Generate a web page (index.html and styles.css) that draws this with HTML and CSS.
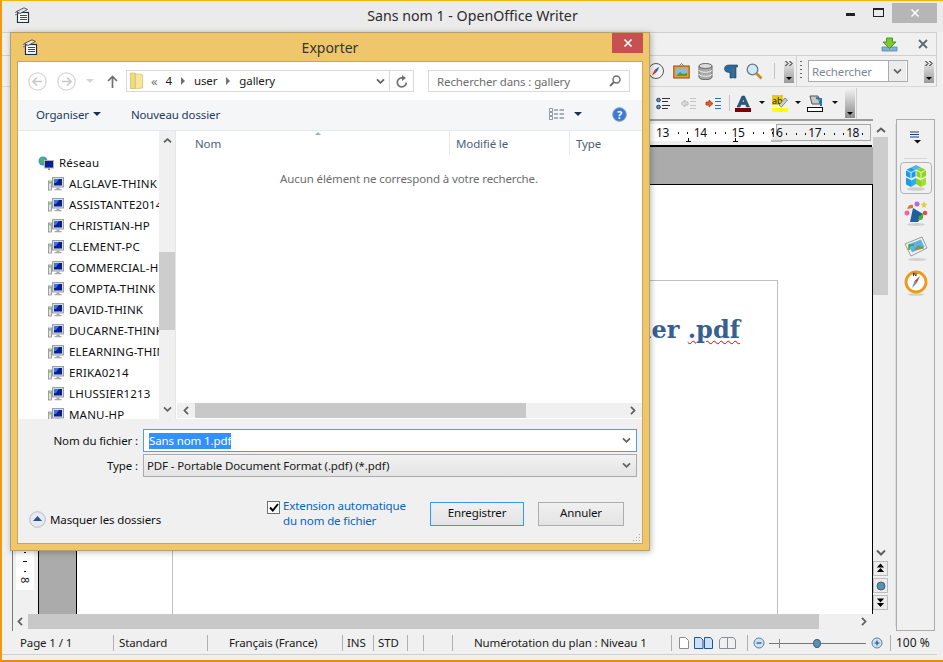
FILE: index.html
```html
<!DOCTYPE html>
<html lang="fr">
<head>
<meta charset="utf-8">
<title>Sans nom 1 - OpenOffice Writer</title>
<link rel="stylesheet" href="styles.css">
</head>
<body>
<svg class="defs" width="0" height="0">
  <symbol id="chev" viewBox="0 0 10 8"><path d="M1 1.500 5 5.500 9 1.500" fill="none" stroke="#606060" stroke-width="2"/></symbol>
  <symbol id="appdoc" viewBox="0 0 16 16">
    <rect x="3.500" y="5.500" width="11" height="10" fill="#fff" stroke="#16324e" stroke-width="1.200"/>
    <path d="M6 8.500h7M6 10.500h7M6 12.500h7" stroke="#1f5585"/>
    <path d="M2.500 4.500 10 .8l3.500 1.700L6 6.500Z" fill="#e4e4e4" stroke="#3a3a3a" stroke-width=".8"/>
    <path d="M1 8 5 6M1 5.500l3-1.500" stroke="#666" stroke-width=".9"/>
  </symbol>
  <symbol id="pc" viewBox="0 0 16 16">
    <rect x="0.500" y="5" width="3" height="9" fill="#dfe5df" stroke="#8a8a8a" stroke-width=".8"/>
    <rect x="1.300" y="6" width="1.400" height="1.500" fill="#4fc04f"/>
    <rect x="4.500" y="1.500" width="11" height="9.500" fill="#d6dbe0" stroke="#9aa0a6"/>
    <rect x="6" y="3" width="8" height="6.500" fill="#0a2090"/>
    <path d="M6 3h5l-3 4H6Z" fill="#3f74e0"/>
    <path d="M8.500 11.500h3v1.500h2v1.200H6.500V13h2Z" fill="#a5a9ad"/>
  </symbol>
</svg>

<div class="window">
  <header class="titlebar">
    <svg class="app-ico"><use href="#appdoc"/></svg>
    <div class="title">Sans nom 1 - OpenOffice Writer</div>
    <div class="winctl">
      <span class="min"></span>
      <span class="max"></span>
      <span class="close"><svg width="10" height="10" viewBox="0 0 10 10"><path d="M1.500 1.500 8.500 8.500M8.500 1.500 1.500 8.500" stroke="#fff" stroke-width="1.500"/></svg></span>
    </div>
  </header>

  <div class="row menu-row">
    <svg class="dl" width="17" height="15" viewBox="0 0 17 15">
      <path d="M1 10h15v4H1Z" fill="#7fb2d8" stroke="#5585a8" stroke-width=".8"/>
      <path d="M5.500 1h6v4H15l-6.500 6.500L2 5h3.500Z" fill="#7cc82e" stroke="#3f8a1a" stroke-width=".9"/>
    </svg>
    <svg class="doc-x" width="10" height="10" viewBox="0 0 10 10"><path d="M1 1 9 9M9 1 1 9" stroke="#5a6a70" stroke-width="1.800"/></svg>
  </div>

  <div class="row tool-row-a">
    <svg class="tb" width="18" height="18" viewBox="0 0 18 18"><circle cx="9" cy="9" r="7.500" fill="#f4f4f4" stroke="#555"/><path d="M12.500 4.500 9.800 10 7.500 8Z" fill="#2255cc"/><path d="M5 13.500 7.500 8l2.300 2Z" fill="#dd3322"/></svg>
    <svg class="tb" width="17" height="16" viewBox="0 0 17 16"><rect x=".8" y="3" width="15.400" height="12" fill="#e8a038" stroke="#8a4a10"/><rect x="3" y="5.500" width="11" height="7.500" fill="#7cc0e8"/><path d="M3 13 7 9l3 2 4-1v3Z" fill="#5a9a2a"/><path d="M6 3l2.500-2.500L11 3" fill="none" stroke="#777"/></svg>
    <svg class="tb db" width="15" height="17" viewBox="0 0 15 17"><path d="M1 3v11c0 3.500 13 3.500 13 0V3Z" fill="#a8aaa8" stroke="#666"/><ellipse cx="7.500" cy="3" rx="6.500" ry="2.500" fill="#dcdcdc" stroke="#666"/><path d="M1 7c0 3 13 3 13 0M1 11c0 3 13 3 13 0" fill="none" stroke="#f0f0f0"/></svg>
    <svg class="tb" width="14" height="15" viewBox="0 0 14 15"><path d="M5 1h8.500v2H12v11H9.500V3h-1v11H6V8.500C2 8.500.5 6.800.5 4.700S2 1 5 1Z" fill="#2a6a9a" stroke="#14405f" stroke-width=".6"/></svg>
    <svg class="tb" width="17" height="17" viewBox="0 0 17 17"><circle cx="6.500" cy="6.500" r="5.300" fill="#cfe8fa" stroke="#6a7a88" stroke-width="1.300"/><path d="M10.500 10.500 15.500 15.500" stroke="#c88a20" stroke-width="2.600"/></svg>
    <span class="vsep"></span>
    <span class="over"><svg width="8" height="7" viewBox="0 0 8 7"><path d="M.5 1 3 3.500.5 6M4.500 1 7 3.500 4.500 6" fill="none" stroke="#000"/></svg><i></i></span>
    <span class="sect">
      <span class="grip"></span>
      <span class="searchcombo"><span class="st">Rechercher</span><span class="drop"><svg width="9" height="7"><use href="#chev"/></svg></span></span>
      <span class="over last"><svg width="8" height="7" viewBox="0 0 8 7"><path d="M.5 1 3 3.500.5 6M4.500 1 7 3.500 4.500 6" fill="none" stroke="#000"/></svg><i></i></span>
    </span>
  </div>

  <div class="row tool-row-b">
    <div class="tb-b">
      <svg width="15" height="13" viewBox="0 0 15 13"><circle cx="2.500" cy="3" r="1.800" fill="#6fa0c8" stroke="#123a5a"/><circle cx="2.500" cy="10" r="1.800" fill="#6fa0c8" stroke="#123a5a"/><path d="M6 1.500h8M6 4.500h6M6 8.500h8M6 11.500h6" stroke="#333"/></svg>
      <svg class="m1" width="17" height="13" viewBox="0 0 17 13"><path d="M1 6.500 5 3v2h3v3H5v2Z" fill="#d8d8d8" stroke="#bbb"/><path d="M10 1.500h6M10 4.500h6M10 8.500h6M10 11.500h6" stroke="#c4c4c4"/></svg>
      <svg class="m2" width="17" height="13" viewBox="0 0 17 13"><path d="M8 6.500 4 3v2H1v3h3v2Z" fill="#e85a20" stroke="#a03010" stroke-width=".7"/><path d="M10 1.500h6M10 4.500h6M10 8.500h6M10 11.500h6" stroke="#1a78b8"/></svg>
      <span class="vsep b"></span>
      <svg class="m3" width="16" height="17" viewBox="0 0 16 17"><path d="M2 12 7 1h2.500l5 11h-3l-1-2.500H6L5 12Zm5-5h2.500L8.300 4Z" fill="#2a5a80" stroke="#143a58" stroke-width=".5"/><rect y="13" width="16" height="4" fill="#7d0000"/></svg>
      <span class="caret m4"></span>
      <svg class="m5" width="16" height="17" viewBox="0 0 16 17"><rect width="11" height="10" fill="#e8c820"/><text x="0" y="9" class="abt">ab</text><path d="M7 10 13 3l2.500 2-6 7Z" fill="#c8ced4" stroke="#666" stroke-width=".7"/><rect y="13" width="16" height="4" fill="#ffff00"/></svg>
      <span class="caret m6"></span>
      <svg class="m7" width="16" height="17" viewBox="0 0 16 17"><path d="M3 1 11 1 13 9H5Z" fill="#c8c8c8" stroke="#555"/><path d="M9 3 14 4 14 11" fill="none" stroke="#1a78b8" stroke-width="2"/><rect x=".5" y="12.500" width="15" height="4" fill="#fff" stroke="#111"/></svg>
      <span class="caret m8"></span>
      <span class="over tall"><i></i></span>
    </div>
  </div>

  <div class="workspace">
    <div class="editor">
      <div class="hruler">
        <div class="rstrip">
          <div class="rlight"><b>13</b><b>14</b><b>15</b></div>
          <div class="rgrey"><b class="g16">16</b><b class="g17">17</b><b>18</b></div>
          <span class="mk mk1"></span><span class="mk mk2"></span>
          <span class="mk-tri"></span>
        </div>
      </div>
      <div class="viewrow">
        <div class="vruler"><div class="vstrip"><i class="vd d1"></i><i class="vd d2"></i><i class="vd d3"></i><span class="v8">8</span></div></div>
        <div class="docview">
          <div class="page">
            <div class="margins">
              <h1 class="heading">Mon fichier <span class="sp">.pdf</span></h1>
            </div>
          </div>
        </div>
      </div>
      <div class="hscroll">
        <svg class="ch-l" width="6" height="9" viewBox="0 0 6 9"><path d="M5 .8 1.500 4.500 5 8.200" fill="none" stroke="#606060" stroke-width="1.800"/></svg>
        <span class="hthumb"></span>
        <svg class="ch-r" width="6" height="9" viewBox="0 0 6 9"><path d="M1 .8 4.500 4.500 1 8.200" fill="none" stroke="#606060" stroke-width="1.800"/></svg>
      </div>
    </div>

    <div class="vscroll">
      <svg class="up" width="10" height="8" viewBox="0 0 10 8"><path d="M1 6 5 2.500 9 6" fill="none" stroke="#606060" stroke-width="2"/></svg>
      <span class="vthumb"></span>
      <svg class="down" width="10" height="8"><use href="#chev"/></svg>
      <span class="nav"><svg width="9" height="11" viewBox="0 0 10 11"><path d="M5 0 9 4.500H1ZM5 5 9 9.500H1Z" fill="#000"/></svg></span>
      <span class="nav"><svg width="10" height="10" viewBox="0 0 10 10"><circle cx="5" cy="5" r="4" fill="#5f8fb0" stroke="#40607a"/></svg></span>
      <span class="nav"><svg width="9" height="11" viewBox="0 0 10 11"><path d="M1 1h8L5 5.500ZM1 6h8l-4 4.500Z" fill="#000"/></svg></span>
    </div>

    <aside class="sidebar">
      <svg class="menuic" width="14" height="13" viewBox="0 0 14 13"><path d="M1 1h9M1 3.500h9M1 6h9" stroke="#1f3f7f" stroke-width="1.200"/><path d="M5 9h7l-3.500 3.500Z" fill="#111"/></svg>
      <span class="sline"></span>
      <span class="sbtn on">
        <svg width="22" height="26" viewBox="0 0 22 26">
          <ellipse cx="11" cy="24" rx="9" ry="1.800" fill="#cfcfcf"/>
          <path d="M1 5l5-2.500L11 5v6l-5 2.500L1 11Z" fill="#1e9be8"/><path d="M6 2.500 11 0l5 2.500L11 5Z" fill="#49b6f2"/><path d="M11 5l5-2.500L21 5v6l-5 2.500L11 11Z" fill="#8fd41e"/><path d="M1 12.500 6 15v7l-5-2.500Z" fill="#1e9be8"/><path d="M6 15l5-2.500V19l-5 3Z" fill="#2eaef0"/><path d="M11 12.500l5 2.500v7l-5-3Z" fill="#8fd41e"/><path d="M16 15l5-2.500v7L16 22Z" fill="#a6e02e"/>
          <path d="M1 5l5 2.500L11 5M6 7.500v6M11 5l5 2.500L21 5M16 7.500v6M11 5v6M6 15l5-2.500 5 2.500" fill="none" stroke="#fff" stroke-width=".8"/>
        </svg>
      </span>
      <span class="sbtn">
        <svg width="24" height="26" viewBox="0 0 24 26"><ellipse cx="12" cy="24.500" rx="9" ry="1.500" fill="#d0d0d0"/><path d="M6 22 9 8l10 6-5 8Z" fill="#1f5f9f"/><path d="M9 8 3 9c1-4 4-5 6-4Z" fill="#d8782a"/><path d="M14 20c4 1 6-2 5-6l-4 2Z" fill="#4fa83a"/><circle cx="13" cy="4" r="2.500" fill="#b46ad8"/><path d="M20 1l1 2.500 2.500.3-2 1.700.6 2.500-2.100-1.300-2.100 1.300.6-2.500-2-1.700 2.500-.3Z" fill="#e8c840"/><circle cx="3" cy="13" r="2.500" fill="#e868a8"/><circle cx="21" cy="13" r="2.300" fill="#e05050"/></svg>
      </span>
      <span class="sbtn">
        <svg width="24" height="25" viewBox="0 0 24 25"><ellipse cx="13" cy="23.500" rx="9" ry="1.500" fill="#d0d0d0"/><path d="M1 8 18 1l5 11L7 20Z" fill="#f4f4f4" stroke="#999"/><path d="M4 8.500 17 3.500l3.500 7.500L8 16.500Z" fill="#5fb0e8"/><path d="M10 14.500l4-5 5 1.500 1 1.500Z" fill="#7a9a3a"/><path d="M5 9h5M5 9v5" stroke="#3aa03a" stroke-width="1.500"/></svg>
      </span>
      <span class="sbtn">
        <svg width="24" height="26" viewBox="0 0 24 26"><ellipse cx="12" cy="24.500" rx="8" ry="1.300" fill="#d0d0d0"/><circle cx="12" cy="12" r="10" fill="#fff" stroke="#ee9a18" stroke-width="2.800"/><path d="M16 6 12.800 13 10.500 11Z" fill="#e04030"/><path d="M8 18 10.500 11l2.300 2Z" fill="#6a8ac8"/><path d="M9.500 6V2.800L12 6V2.800" fill="none" stroke="#222" stroke-width=".9"/></svg>
      </span>
    </aside>
  </div>

  <footer class="status">
    <span class="cell c1">Page 1 / 1</span>
    <span class="cell c2">Standard</span>
    <span class="cell c3">Français (France)</span>
    <span class="cell c4">INS</span>
    <span class="cell c5">STD</span>
    <span class="cell c6"></span>
    <span class="cell c7"></span>
    <span class="cell c8">Numérotation du plan : Niveau 1</span>
    <span class="cell c9">
      <svg width="10" height="12" viewBox="0 0 10 12"><path d="M.5.5h6l3 3v8H.5Z" fill="#fff" stroke="#8a8f95"/></svg>
      <svg class="dbl" width="19" height="12" viewBox="0 0 19 12"><path d="M.5.500h6l2.500 2.500v8.500H.500Z" fill="#cfe0f4" stroke="#1f5590"/><path d="M10.500.5h6l2 2.500v8.500h-8Z" fill="#cfe0f4" stroke="#1f5590"/></svg>
      <svg class="bk" width="17" height="12" viewBox="0 0 17 12"><path d="M.5 3 2.500.5h6v11h-8ZM8.500.5h6L16.500 3v8.500h-8Z" fill="#eef0f2" stroke="#8a8f95"/></svg>
    </span>
    <span class="cell c10">
      <svg width="12" height="12" viewBox="0 0 12 12"><circle cx="6" cy="6" r="5" fill="#cfe2f4" stroke="#5a7f9f"/><path d="M3.500 6h5" stroke="#1f4f7f" stroke-width="1.200"/></svg>
      <span class="slider"><i class="stick"></i><i class="knob"></i></span>
      <svg width="12" height="12" viewBox="0 0 12 12"><circle cx="6" cy="6" r="5" fill="#cfe2f4" stroke="#5a7f9f"/><path d="M3.500 6h5M6 3.500v5" stroke="#1f4f7f" stroke-width="1.200"/></svg>
    </span>
    <span class="cell c11">100 %</span>
  </footer>
</div>

<section class="dialog">
  <div class="dlg-title">
    <svg class="dlg-ico"><use href="#appdoc"/></svg>
    <span class="dlg-name">Exporter</span>
    <span class="dlg-close"><svg width="10" height="10" viewBox="0 0 10 10"><path d="M1.500 1.500 8.500 8.500M8.500 1.500 1.500 8.500" stroke="#fff" stroke-width="1.600"/></svg></span>
  </div>
  <div class="dlg-body">
    <div class="navbar">
      <svg class="circ" width="19" height="19" viewBox="0 0 19 19"><circle cx="9.500" cy="9.500" r="8.700" fill="#fff" stroke="#d6d6d6" stroke-width="1.300"/><path d="M14 9.500H5.500M9 5.500l-4 4 4 4" fill="none" stroke="#c8c8c8" stroke-width="1.600"/></svg>
      <svg class="circ fw" width="19" height="19" viewBox="0 0 19 19"><circle cx="9.500" cy="9.500" r="8.700" fill="#fff" stroke="#d6d6d6" stroke-width="1.300"/><path d="M5 9.500h8.500M10 5.500l4 4-4 4" fill="none" stroke="#c8c8c8" stroke-width="1.600"/></svg>
      <span class="hist"></span>
      <svg class="uparr" width="11" height="13" viewBox="0 0 11 13"><path d="M5.500 13V2M1 6l4.500-4.500L10 6" fill="none" stroke="#707070" stroke-width="1.700"/></svg>
      <div class="addr">
        <svg class="folder" width="13" height="17" viewBox="0 0 13 17"><path d="M.5 1h5v16h-5Z" fill="#e8d070"/><path d="M5 2h5l2.500 1v13l-7.500 1Z" fill="#f6e69a" stroke="#cdb45a" stroke-width=".6"/><path d="M.5 1h4.500v15l-4.500 1Z" fill="#f2dc80" stroke="#cdb45a" stroke-width=".6"/></svg>
        <span class="crumbs">
          <span class="lq">«</span><span class="cr">4</span><i class="tri"></i><span class="cr">user</span><i class="tri"></i><span class="cr">gallery</span>
        </span>
        <svg class="addr-ch" width="9" height="7"><use href="#chev"/></svg>
        <span class="refresh"><svg width="12" height="13" viewBox="0 0 12 13"><path d="M10.300 7.500A4.500 4.500 0 1 1 6.500 3" fill="none" stroke="#707070" stroke-width="1.700"/><path d="M6 0l4 3-4 3Z" fill="#707070"/></svg></span>
      </div>
      <div class="searchbox">
        <span>Rechercher dans : gallery</span>
        <svg width="12" height="12" viewBox="0 0 12 12"><circle cx="7.500" cy="4.500" r="3.500" fill="none" stroke="#707070" stroke-width="1.500"/><path d="M5 7 1 11" stroke="#707070" stroke-width="2"/></svg>
      </div>
    </div>

    <div class="cmdbar">
      <span class="cmd">Organiser</span><i class="dcaret"></i>
      <span class="cmd new">Nouveau dossier</span>
      <svg class="viewic" width="15" height="12" viewBox="0 0 15 12"><path d="M.5.5h3v3h-3ZM.5 4.500h3v3h-3ZM.5 8.500h3v3h-3Z" fill="#fff" stroke="#6f7f9f" stroke-width=".8"/><path d="M5 2h4M10.500 2H15M5 6h4M10.500 6H15M5 10h4M10.500 10H15" stroke="#5a6a80"/></svg>
      <i class="dcaret v"></i>
      <svg class="help" width="15" height="15" viewBox="0 0 15 15"><circle cx="7.500" cy="7.500" r="6.800" fill="#3a7ad8" stroke="#8a9ab0"/><text x="7.500" y="11.500" class="q">?</text></svg>
    </div>

    <div class="browser">
      <nav class="tree">
        <div class="list">
          <div class="net"><svg width="16" height="16" viewBox="0 0 16 16"><circle cx="5" cy="6" r="4.500" fill="#3a9ad8"/><path d="M2 4c2-2 3 0 4-1l1 3-3 3Z" fill="#5fb83a"/><rect x="6.500" y="5.500" width="9" height="7.500" fill="#0a2090" stroke="#b0b6bc"/><path d="M10 13.500h2v1.500h-2Z" fill="#888"/></svg>Réseau</div>
          <div class="pc"><svg width="16" height="16"><use href="#pc"/></svg>ALGLAVE-THINK</div>
          <div class="pc"><svg width="16" height="16"><use href="#pc"/></svg>ASSISTANTE2014</div>
          <div class="pc"><svg width="16" height="16"><use href="#pc"/></svg>CHRISTIAN-HP</div>
          <div class="pc"><svg width="16" height="16"><use href="#pc"/></svg>CLEMENT-PC</div>
          <div class="pc"><svg width="16" height="16"><use href="#pc"/></svg>COMMERCIAL-HP</div>
          <div class="pc"><svg width="16" height="16"><use href="#pc"/></svg>COMPTA-THINK</div>
          <div class="pc"><svg width="16" height="16"><use href="#pc"/></svg>DAVID-THINK</div>
          <div class="pc"><svg width="16" height="16"><use href="#pc"/></svg>DUCARNE-THINK</div>
          <div class="pc"><svg width="16" height="16"><use href="#pc"/></svg>ELEARNING-THINK</div>
          <div class="pc"><svg width="16" height="16"><use href="#pc"/></svg>ERIKA0214</div>
          <div class="pc"><svg width="16" height="16"><use href="#pc"/></svg>LHUSSIER1213</div>
          <div class="pc"><svg width="16" height="16"><use href="#pc"/></svg>MANU-HP</div>
        </div>
        <div class="tscroll">
          <svg width="9" height="7" viewBox="0 0 10 8"><path d="M1 6 5 2.500 9 6" fill="none" stroke="#606060" stroke-width="2"/></svg>
          <span class="tthumb"></span>
          <svg width="9" height="7"><use href="#chev"/></svg>
        </div>
      </nav>
      <div class="files">
        <div class="cols">
          <i class="sort"></i>
          <span class="col cn">Nom</span>
          <span class="col cm">Modifié le</span>
          <span class="col ct">Type</span>
        </div>
        <div class="empty">Aucun élément ne correspond à votre recherche.</div>
        <div class="fscroll">
          <svg width="6" height="9" viewBox="0 0 6 9"><path d="M5 .8 1.500 4.500 5 8.200" fill="none" stroke="#606060" stroke-width="1.800"/></svg>
          <span class="fthumb"></span>
          <svg width="6" height="9" viewBox="0 0 6 9"><path d="M1 .8 4.500 4.500 1 8.200" fill="none" stroke="#606060" stroke-width="1.800"/></svg>
        </div>
      </div>
    </div>

    <div class="form">
      <div class="frow first">
        <label class="lab">Nom du fichier :</label>
        <div class="inp"><span class="sel">Sans nom 1.pdf</span><svg width="9" height="7"><use href="#chev"/></svg></div>
      </div>
      <div class="frow">
        <label class="lab">Type :</label>
        <div class="inp sel-type"><span>PDF - Portable Document Format (.pdf) (*.pdf)</span><svg width="9" height="7"><use href="#chev"/></svg></div>
      </div>
      <div class="actions">
        <div class="hide">
          <svg width="17" height="17" viewBox="0 0 17 17"><circle cx="8.500" cy="8.500" r="7.800" fill="#e6ebf2" stroke="#b4bcc8"/><path d="M8.500 5 13 10H4Z" fill="#2a4f98"/></svg>
          <span>Masquer les dossiers</span>
        </div>
        <div class="auto">
          <span class="check"><svg width="10" height="9" viewBox="0 0 10 9"><path d="M1 4.500 3.800 7.500 9 1" fill="none" stroke="#000" stroke-width="2"/></svg></span>
          <span class="autotxt">Extension automatique<br>du nom de fichier</span>
        </div>
        <button class="btn primary">Enregistrer</button>
        <button class="btn">Annuler</button>
      </div>
      <span class="gripper"></span>
    </div>
  </div>
</section>
</body>
</html>
```

FILE: styles.css
```css
* { box-sizing: border-box; }
html, body { margin: 0; padding: 0; }
body {
  width: 943px; height: 662px; overflow: hidden; position: relative;
  background: #f0f0f0;
  font-family: "Noto Sans", "Open Sans", sans-serif;
  font-size: 11.500px; letter-spacing: -.12px; color: #1a1a1a;
}
.defs { position: absolute; }
svg { display: block; flex: none; }

/* main window */
.window {
  width: 943px; height: 662px; display: flex; flex-direction: column;
  border-top: 1px solid #f7b500;
  border-left: 2px solid #f09a10;
  border-bottom: 2px solid #ea8a18;
  background: #f0f0f0;
}
.titlebar { height: 31px; flex: none; background: #ebebeb; display: flex; align-items: flex-start; position: relative; }
.app-ico { width: 16px; height: 16px; margin: 6px 0 0 12px; }
.title { position: absolute; left: 0; right: 0; top: 5px; text-align: center; font-size: 14.200px; letter-spacing: 0; line-height: 20px; color: #2b2b2b; }
.winctl { margin-left: auto; display: flex; height: 21px; margin-right: 6px; }
.min { width: 9px; height: 3px; background: #222; margin: 12px 18px 0 0; }
.max { width: 11px; height: 9px; border: 1px solid #222; border-top-width: 2px; margin: 7px 8px 0 0; }
.close { width: 45px; height: 20px; margin-top: 2px; background: #b6b6b6; display: flex; align-items: center; justify-content: center; margin-right: 0; }

.row { flex: none; display: flex; align-items: center; }
.menu-row { height: 24px; margin-right: 6px; border-top: 1px solid #cfcfcf; border-right: 1px solid #cfcfcf; border-bottom: 1px solid #cfcfcf; padding-right: 8px; justify-content: flex-end; }
.dl { margin-right: 20px; }
.tool-row-a { height: 31px; margin-right: 6px; border-right: 1px solid #cfcfcf; border-bottom: 1px solid #d8d8d8; justify-content: flex-end; padding-right: 0; }
.tb { margin-right: 8px; }
.tb.db { margin-right: 11px; }
.vsep { width: 1px; height: 16px; background: #c4c4c4; margin: 0 9px 0 3px; }
.over { width: 10px; height: 24px; margin-right: 2px; background: linear-gradient(#f4f4f4, #9a9a9a); position: relative; display: flex; justify-content: center; padding-top: 1px; }
.over svg { height: 7px; }
.over i { position: absolute; left: 2px; bottom: 3px; border: 3px solid transparent; border-top: 3px solid #000; border-bottom: 0; border-left-width: 3px; }
.sect { display: flex; align-items: center; height: 30px; border-left: 1px solid #d4d4d4; padding-left: 3px; margin-left: 0; }
.grip { width: 2px; height: 20px; background: repeating-linear-gradient(#666 0 1px, transparent 1px 4px); margin-right: 6px; }
.searchcombo { width: 100px; height: 22px; background: #fff; border: 1px solid #ababab; display: flex; align-items: center; margin-right: 16px; padding-left: 3px; }
.st { color: #7d8793; flex: 1; }
.drop { width: 18px; height: 20px; background: #ececec; border-left: 1px solid #ababab; margin-right: 1px; display: flex; align-items: center; justify-content: center; }
.over.last { margin-right: 2px; }

.tool-row-b { height: 32px; justify-content: flex-start; }
.tb-b { width: 855px; height: 31px; display: flex; align-items: center; justify-content: flex-end; border-right: 1px solid #d0d0d0; padding-right: 1px; }
.m1 { margin-left: 9px; }
.m2 { margin-left: 8px; }
.vsep.b { margin: 0 5px 0 7px; height: 16px; }
.caret { width: 0; height: 0; border: 3px solid transparent; border-top: 3px solid #111; border-bottom: 0; margin-top: -1px; }
.m4 { margin-left: 8px; }
.m5 { margin-left: 7px; }
.m6 { margin-left: 7px; }
.m7 { margin-left: 6px; }
.m8 { margin-left: 9px; }
.over.tall { height: 29px; margin-left: 7px; margin-right: 0; background: linear-gradient(#f0f0f0, #8c8c8c); }
.abt { font: 9px "Noto Sans", sans-serif; fill: #222; }

/* workspace */
.workspace { flex: 1; display: flex; min-height: 0; padding-left: 10px; }
.editor { width: 861px; display: flex; flex-direction: column; border-left: 1px solid #7a7a7a; border-top: 2px solid #9c9c9c; }
.hruler { height: 26px; flex: none; padding-top: 3px; border-bottom: 2px solid #000; background: #f0f0f0; margin-right: 1px; }
.rstrip { height: 17px; display: flex; justify-content: flex-end; position: relative; padding-right: 1px; }
.rlight { width: 760px; background: #fff repeating-linear-gradient(90deg, #111 0 1px, transparent 1px 9.450px); background-size: 100% 2px; background-repeat: no-repeat; background-position: 0 8px; display: flex; justify-content: flex-end; font-size: 12px; line-height: 17px; padding-right: 8.200px; }
.rgrey { width: 95px; background: #f0f0f0 repeating-linear-gradient(90deg, #111 0 1px, transparent 1px 9.450px); background-size: 100% 2px; background-repeat: no-repeat; background-position: 0 8px; border: 1px solid #a8a8a8; display: flex; font-size: 12px; line-height: 15px; }
.rstrip b { font-weight: 400; flex: none; width: 16px; text-align: center; color: #111; letter-spacing: -.4px; }
.rlight b { background: #fff; margin-right: 21.800px; }
.rgrey b { background: #f0f0f0; margin-left: 21.800px; }
.rgrey .g16 { margin-left: -9px; background: transparent; }
.rgrey .g17 { margin-left: 22.800px; }
.mk { position: absolute; bottom: -1px; width: 5px; height: 4px; border-bottom: 1px solid #000; }
.mk::before { content: ""; position: absolute; left: 2px; top: 0; width: 1px; height: 4px; background: #000; }
.mk1 { right: 181px; }
.mk2 { right: 134px; }
.mk-tri { position: absolute; right: 90px; bottom: -1px; width: 11px; height: 7px; background: #e8e8e8; clip-path: polygon(50% 0, 100% 60%, 100% 100%, 0 100%, 0 60%); box-shadow: inset 0 -2px #bbb; }

.viewrow { flex: 1; display: flex; min-height: 0; }
.vruler { width: 25px; flex: none; padding-left: 3px; display: flex; align-items: flex-end; padding-bottom: 24px; }
.vstrip { width: 18px; height: 44px; background: #fff; display: flex; flex-direction: column; align-items: center; font-size: 11px; line-height: 10px; }
.vd { display: block; height: 1px; background: #111; flex: none; }
.d1 { width: 2px; margin-top: 6px; }
.d2 { width: 4px; margin-top: 8px; }
.d3 { width: 2px; margin-top: 9px; }
.v8 { transform: rotate(90deg); margin-top: 3px; }
.docview { flex: 1; background: #ababab; padding: 37px 0 0 37px; border-left: 1px solid #000; min-width: 0; }
.page { height: 100%; background: #fff; border-left: 1px solid #000; border-top: 1px solid #000; border-right: 1px solid #000; padding: 95px 94px 0 95px; }
.margins { height: 100%; border: 1px solid #c0c0c0; border-bottom: 0; padding-top: 29px; text-align: right; }
.heading { margin: 0; padding-right: 37px; font: 700 24px/40px "DejaVu Serif", "Liberation Serif", serif; letter-spacing: 0; color: #366091; white-space: nowrap; }
.sp { text-decoration: underline wavy #e00000 1px; text-underline-offset: 2px; }

.hscroll { height: 17px; flex: none; display: flex; align-items: center; padding-left: 4px; background: #f0f0f0; padding-bottom: 2px; }
.hthumb { width: 791px; height: 15px; background: #c8c8c8; margin-left: 5px; }
.ch-r { margin-left: 42px; }

.vscroll { width: 15px; flex: none; display: flex; flex-direction: column; align-items: center; padding-top: 7px; background: #f0f0f0; }
.vscroll .up { margin-bottom: 3px; }
.vthumb { width: 15px; height: 158px; background: #cdcdcd; margin-top: 0; flex: none; }
.vscroll .down { margin-top: 254px; margin-bottom: 2px; }
.nav { width: 15px; height: 15px; margin-top: 2px; background: #ececec; border: 1px solid #bdbdbd; display: flex; align-items: center; justify-content: center; flex: none; }

.sidebar { width: 39px; flex: none; margin: 0 0 0 8px; height: 512px; border-left: 1px solid #adadad; border-right: 1px solid #adadad; border-bottom: 1px solid #adadad; border-top: 1px solid #adadad; display: flex; flex-direction: column; align-items: center; box-shadow: -6px 0 0 -5px #ddd; }
.menuic { margin-top: 11px; }
.sline { width: 23px; height: 1px; background: #d8d8d8; margin: 14px 0 3px; flex: none; }
.sbtn { width: 32px; height: 32px; border: 1px solid transparent; border-radius: 4px; display: flex; align-items: center; justify-content: center; flex: none; }
.sbtn.on { border-color: #b4b4b4; }
.sbtn + .sbtn { margin-top: 3px; }

/* status bar */
.status { height: 24px; flex: none; margin-right: 6px; border-bottom: 1px solid #d0d0d0; display: flex; align-items: center; line-height: 16px; margin-bottom: 5px; padding-top: 1px; }
.cell { height: 16px; display: flex; align-items: center; border-right: 1px solid #b0b0b0; white-space: nowrap; flex: none; }
.c1 { width: 112px; padding-left: 18px; }
.c2 { width: 94px; padding-left: 5px; }
.c3 { width: 135px; padding-left: 21px; }
.c4 { width: 31px; padding-left: 4px; }
.c5 { width: 34px; padding-left: 4px; }
.c6 { width: 16px; }
.c7 { width: 29px; }
.c8 { width: 219px; padding-left: 21px; }
.c9 { width: 76px; padding-left: 7px; }
.dbl { margin-left: 5px; }
.bk { margin-left: 6px; }
.c10 { width: 143px; padding-left: 5px; }
.slider { width: 97px; height: 9px; margin: 0 5px 0 4px; position: relative; background: linear-gradient(#777, #777) 0 4px / 100% 1px no-repeat; }
.stick { position: absolute; left: 10px; top: 0; width: 1px; height: 9px; background: #888; }
.knob { position: absolute; left: 44px; top: 0; width: 8px; height: 9px; border-radius: 50%; background: #5f8fb0; border: 1px solid #40607a; }
.c11 { padding-left: 5px; border-right: 0; font-size: 12px; letter-spacing: 0; }

/* dialog window on desktop */
.dialog {
  position: absolute; left: 10px; top: 32px; width: 640px; height: 519px;
  background: #efc669; border: 1px solid #b7a069;
  box-shadow: 1px 1px 6px rgba(0,0,0,.28);
  padding: 0 6px 6px; display: flex; flex-direction: column;
}
.dlg-title { height: 28px; flex: none; position: relative; display: flex; align-items: center; }
.dlg-ico { width: 16px; height: 16px; margin: 0 0 0 5px; }
.dlg-name { position: absolute; left: 0; right: 0; top: 5px; text-align: center; font-size: 14px; letter-spacing: 0; line-height: 20px; color: #353535; }
.dlg-close { position: absolute; right: 0; top: 0; width: 31px; height: 20px; background: #c75050; display: flex; align-items: center; justify-content: center; }
.dlg-body { flex: 1; min-height: 0; background: #f0f0f0; border: 1px solid #c9a75a; display: flex; flex-direction: column; }

.navbar { height: 38px; flex: none; background: #fff; display: flex; align-items: center; padding-left: 10px; }
.fw { margin-left: 10px; }
.hist { width: 0; height: 0; border: 4px solid transparent; border-top: 4px solid #d4d4d4; border-bottom: 0; margin-left: 10px; }
.uparr { margin-left: 13px; }
.addr { width: 288px; height: 22px; margin-left: 8px; border: 1px solid #d9d9d9; display: flex; align-items: center; padding-left: 3px; }
.folder { margin-top: -1px; }
.crumbs { display: flex; align-items: center; margin-left: 8px; flex: 1; color: #1a1a1a; }
.lq { color: #777; margin-right: 8px; font-size: 13px; line-height: 14px; }
.cr { line-height: 16px; }
.tri { width: 0; height: 0; border: 4px solid transparent; border-left: 4px solid #707070; border-right: 0; margin: 0 9px 0 9px; }
.addr-ch { margin-right: 4px; }
.refresh { width: 24px; height: 20px; border-left: 1px solid #d9d9d9; display: flex; align-items: center; justify-content: center; }
.searchbox { width: 202px; height: 22px; margin-left: 14px; border: 1px solid #d9d9d9; display: flex; align-items: center; justify-content: space-between; padding: 0 8px; color: #6d6d6d; }

.cmdbar { height: 31px; flex: none; background: #f5f6f7; border-bottom: 1px solid #e6e8ea; display: flex; align-items: center; padding: 0 0 2px 18px; color: #1e3a5f; }
.cmd { white-space: nowrap; flex: none; }
.dcaret { width: 0; height: 0; border: 4px solid transparent; border-top: 4px solid #1e3050; border-bottom: 0; margin-left: 4px; }
.new { margin-left: 30px; }
.viewic { margin-left: 329px; }
.dcaret.v { margin-left: 10px; }
.help { margin-left: 30px; }
.q { font: 700 11px "Noto Sans", sans-serif; fill: #fff; text-anchor: middle; }

.browser { height: 288px; flex: none; display: flex; background: #fff; }
.tree { width: 158px; flex: none; display: flex; border-right: 1px solid #e6e6e6; overflow: hidden; }
.list { width: 141px; flex: none; padding-top: 21px; overflow: hidden; color: #111; letter-spacing: .18px; }
.net, .pc { height: 21px; display: flex; align-items: center; white-space: nowrap; gap: 5px; }
.net { padding-left: 20px; }
.pc { padding-left: 30px; }
.tscroll { width: 16px; flex: none; background: #f0f0f0; display: flex; flex-direction: column; align-items: center; padding-top: 6px; }
.tthumb { width: 16px; height: 78px; background: #cdcdcd; margin-top: 108px; margin-bottom: 76px; flex: none; }
.files { flex: 1; min-width: 0; display: flex; flex-direction: column; }
.cols { height: 25px; flex: none; display: flex; position: relative; color: #4c607a; line-height: 25px; }
.col { padding-left: 6px; height: 24px; position: relative; }
.cn { width: 274px; padding-left: 19px; border-right: 1px solid #e8e8e8; }
.cm { width: 120px; border-right: 1px solid #e8e8e8; }
.sort { position: absolute; left: 139px; top: 1px; border: 3px solid transparent; border-bottom: 3px solid #8ab4d8; border-top: 0; }
.empty { flex: 1; text-align: center; color: #6d6d6d; padding-top: 14px; line-height: 17px; }
.fscroll { height: 15px; flex: none; display: flex; align-items: center; background: #f0f0f0; padding: 0 6px; margin: 0 0 1px 1px; }
.fthumb { width: 331px; height: 15px; background: #c8c8c8; margin: 0 104px 0 6px; }

.form { flex: 1; min-height: 0; position: relative; padding: 10px 5px 0 0; }
.frow { display: flex; align-items: center; height: 23px; margin-top: 2px; }
.frow.first { margin-top: 0; }
.lab { width: 120px; text-align: right; color: #111; }
.inp { width: 494px; height: 23px; margin-left: 5px; background: #fff; border: 1px solid #5a9ad6; display: flex; align-items: center; justify-content: space-between; padding: 0 5px; flex: none; }
.sel { background: #3390ff; color: #fff; line-height: 16px; }
.sel-type { background: linear-gradient(#f2f2f2, #e4e4e4); border-color: #ababab; padding-left: 3px; }
.actions { display: flex; align-items: center; height: 26px; margin-top: 24px; position: relative; }
.hide { display: flex; align-items: center; gap: 4px; margin-left: 11px; margin-top: 11px; width: 238px; color: #111; flex: none; }
.auto { display: flex; width: 163px; align-self: flex-start; margin-top: -3px; flex: none; }
.check { width: 13px; height: 13px; background: #fff; border: 1px solid #707070; display: flex; align-items: center; justify-content: center; margin-top: 3px; margin-right: 3px; flex: none; }
.autotxt { color: #0066cc; line-height: 15px; white-space: nowrap; }
.btn { height: 24px; width: 86px; font: inherit; letter-spacing: inherit; color: #111; border: 1px solid #adadad; background: linear-gradient(#f0f0f0, #e4e4e4); padding: 0 0 3px; margin-left: 14px; flex: none; }
.btn.primary { width: 94px; margin-left: 0; border-color: #3399ff; }
.gripper { position: absolute; right: 2px; bottom: 2px; width: 8px; height: 8px; background: radial-gradient(#aaa 40%, transparent 45%) 0 0 / 3px 3px; clip-path: polygon(100% 0, 100% 100%, 0 100%); }
```
